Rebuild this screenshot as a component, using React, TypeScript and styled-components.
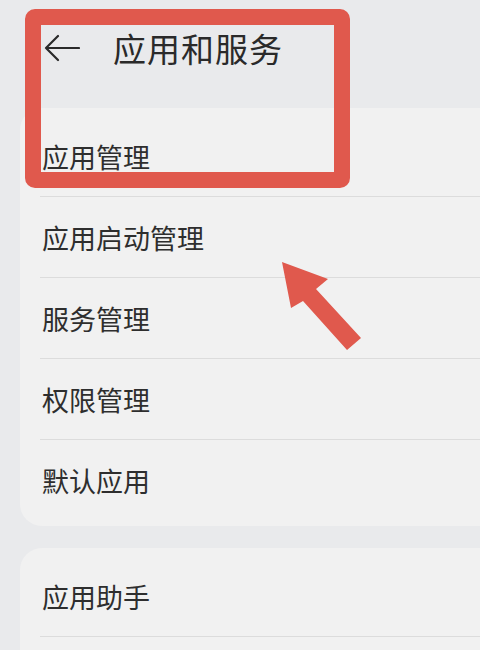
import React from 'react';
import styled, { createGlobalStyle } from 'styled-components';

const GlobalStyle = createGlobalStyle`
	html, body {
		margin: 0;
		padding: 0;
		background: #e9eaec;
		overflow: hidden;
	}
	body {
		font-family: "Noto Sans CJK SC", "Noto Sans", sans-serif;
		color: #2b2b2b;
	}
`

const Screen = styled.div`
	position: relative;
	width: 480px;
	height: 650px;
	overflow: hidden;
	background: #e9eaec;
`

const Header = styled.div`
	display: flex;
	align-items: center;
	height: 108px;
	padding: 0 0 12px 44px;
	box-sizing: border-box;
`

const BackButton = styled.div`
	display: flex;
	width: 69px;
	height: 30px;
	align-items: center;
`

const Title = styled.div`
	font-size: 33px;
	letter-spacing: 1px;
	line-height: 1;
	color: #2a2a2a;
`

const Card = styled.div<{ gap?: number }>`
	margin: ${(props) => props.gap ?? 0}px -30px 0 20px;
	padding: 8px 0 5px 0;
	background: #f1f1f1;
	border-radius: 22px;
`

const Row = styled.div<{ last?: boolean }>`
	display: flex;
	align-items: center;
	height: 81px;
	margin-left: 20px;
	padding-left: 2px;
	font-size: 27px;
	color: #2e2e2e;
	border-bottom: ${(props) => (props.last ? 'none' : '1.5px solid #dcdcdc')};
	box-sizing: border-box;
`

const Highlight = styled.div`
	position: absolute;
	left: 25px;
	top: 9px;
	width: 325px;
	height: 179px;
	box-sizing: border-box;
	border: 16px solid #e0594d;
	border-radius: 10px;
	pointer-events: none;
`

const Pointer = styled.svg`
	position: absolute;
	left: 270px;
	top: 250px;
	pointer-events: none;
`

const mainItems = ['应用管理', '应用启动管理', '服务管理', '权限管理', '默认应用'];

const App = () => {
	return <Screen>
		<GlobalStyle />
		<Header>
			<BackButton>
				<svg width="36" height="30" viewBox="0 0 36 30">
					<path d="M35 15 H2 M14 3 L2 15 L14 27" fill="none" stroke="#2a2a2a" strokeWidth="2.2" strokeLinecap="round" strokeLinejoin="round" />
				</svg>
			</BackButton>
			<Title>应用和服务</Title>
		</Header>
		<Card>
			{mainItems.map((item, index) => (
				<Row key={item} last={index === mainItems.length - 1}>{item}</Row>
			))}
		</Card>
		<Card gap={22}>
			<Row>应用助手</Row>
			<Row last>&nbsp;</Row>
		</Card>
		<Highlight />
		{/* annotation arrow pointing at 应用启动管理 */}
		<Pointer width="100" height="110" viewBox="0 0 100 110">
			<path d="M12 12 L58 29 L46 39 L91 88 L77 100 L33 51 L21 58 Z" fill="#e0594d" />
		</Pointer>
	</Screen>;
};

export default App;
